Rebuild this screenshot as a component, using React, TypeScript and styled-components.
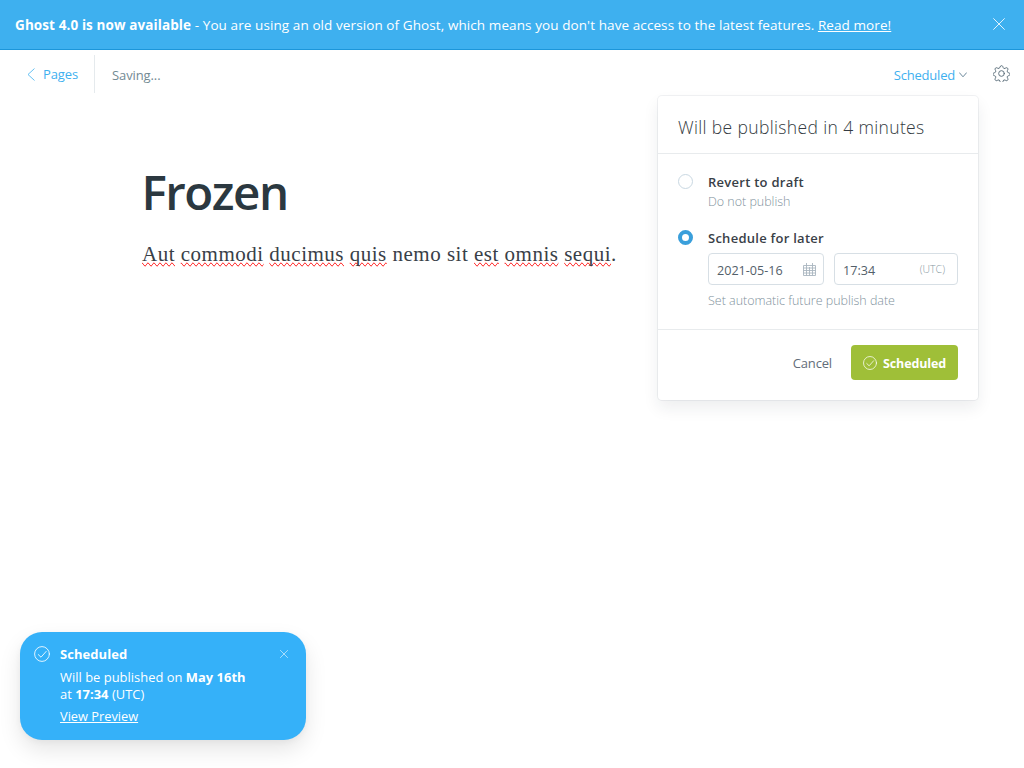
import React from 'react';
import styled, { createGlobalStyle } from 'styled-components';

const GlobalStyle = createGlobalStyle`
  *, *::before, *::after { box-sizing: border-box; }
  html, body { margin: 0; padding: 0; height: 100%; }
  body {
    background: #fff;
    color: #394047;
    font-family: "Open Sans", "Noto Sans", sans-serif;
    font-size: 13px;
    overflow: hidden;
  }
  h1, h2, p { margin: 0; }
`;

const Screen = styled.div`
  position: relative;
  display: flex;
  flex-direction: column;
  height: 768px;
  width: 1024px;
  overflow: hidden;
`;

const Banner = styled.header`
  display: flex;
  align-items: center;
  justify-content: space-between;
  height: 50px;
  padding: 0 19px 1px 15px;
  background: #3eb0ef;
  border-bottom: 1px solid #1c96da;
  color: #fff;
`;

const BannerText = styled.p`
  font-size: 13.5px;
  font-weight: 500;
  line-height: 20px;
  letter-spacing: 0.09px;
  white-space: nowrap;
  padding-top: 1px;
  b { font-weight: 700; letter-spacing: 0.1px; }
`;

const Link = styled.a`
  color: inherit;
  text-decoration: underline;
  text-underline-offset: 1px;
`;

const IconButton = styled.button`
  display: flex;
  padding: 0;
  border: 0;
  background: none;
  color: inherit;
`;

const Toolbar = styled.nav`
  display: flex;
  align-items: center;
  height: 46px;
  padding: 2px 14.5px 0 27px;
  line-height: 20px;
  white-space: nowrap;
`;

const BackLink = styled.a`
  display: flex;
  align-items: center;
  height: 38px;
  width: 68px;
  gap: 8px;
  border-right: 1px solid #e5eaed;
  color: #3eb0ef;
  font-size: 13px;
  letter-spacing: -0.1px;
`;

const SaveState = styled.span`
  flex: 1;
  padding: 2px 0 0 17px;
  color: #738a94;
  font-size: 13px;
  letter-spacing: -0.1px;
`;

const StatusTrigger = styled.button`
  display: flex;
  align-items: center;
  gap: 4px;
  margin: 2px 25.5px 0 0;
  padding: 0;
  border: 0;
  background: none;
  color: #3eb0ef;
  font: inherit;
  letter-spacing: -0.2px;
`;

const SettingsButton = styled(IconButton)`
  margin-bottom: 1px;
`;

const Article = styled.main`
  padding: 64px 0 0 142px;
`;

const Title = styled.h1`
  margin-left: -0.5px;
  color: #2b3840;
  font-size: 47.5px;
  font-weight: 600;
  line-height: 64px;
  letter-spacing: -1.5px;
`;

const Paragraph = styled.p`
  margin-top: 14px;
  color: #394047;
  font-family: "Liberation Serif", serif;
  font-size: 21px;
  line-height: 32px;
  letter-spacing: 0.5px;
  white-space: nowrap;
`;

const Misspelled = styled.span`
  text-decoration-line: spelling-error;
`;

const Popover = styled.section`
  position: absolute;
  top: 96px;
  left: 658px;
  width: 320px;
  height: 304px;
  background: #fff;
  border-radius: 4px;
  box-shadow: 0 0 0 1px rgba(99, 114, 130, 0.09), 0 8px 16px rgba(27, 39, 51, 0.08);
`;

const PopoverTitle = styled.h2`
  height: 58px;
  padding: 0 20px;
  border-bottom: 1px solid #e8ebed;
  color: #343b42;
  font-size: 17.5px;
  font-weight: 300;
  line-height: 63px;
  letter-spacing: 0.36px;
  white-space: nowrap;
`;

const Options = styled.div`
  display: flex;
  flex-direction: column;
  gap: 17px;
  height: 176px;
  padding: 18px 20px 0;
  border-bottom: 1px solid #e8ebed;
`;

const Option = styled.div`
  display: grid;
  grid-template-columns: 30px 1fr;
`;

const Radio = styled.span<{ $checked?: boolean }>`
  width: 15px;
  height: 15px;
  margin-top: 2px;
  border: ${p => (p.$checked ? '4px solid #3a9fdb' : '1px solid #c9d8e2')};
  border-radius: 50%;
  background: #fff;
`;

const OptionLabel = styled.div`
  margin-bottom: 1px;
  font-size: 13px;
  font-weight: 600;
  line-height: 20px;
  letter-spacing: 0.26px;
`;

const OptionHint = styled.div`
  color: #7f929d;
  font-size: 12.5px;
  font-weight: 300;
  line-height: 18px;
  letter-spacing: -0.02px;
`;

const Fields = styled.div`
  display: flex;
  gap: 10px;
  margin: 5px 0 7px;
`;

const Field = styled.div<{ $width: number }>`
  display: flex;
  align-items: center;
  justify-content: space-between;
  width: ${p => p.$width}px;
  height: 32px;
  padding: 0 7px 0 8px;
  border: 1px solid #d7dfe5;
  border-radius: 4px;
  color: #53606a;
  font-size: 12.6px;
`;

const FieldValue = styled.span`
  padding-top: 2px;
`;

const Zone = styled.span`
  padding-right: 5px;
  color: #8797a1;
  font-size: 10.5px;
  font-weight: 300;
`;

const Actions = styled.footer`
  display: flex;
  align-items: center;
  justify-content: flex-end;
  gap: 19px;
  padding: 15px 20px;
`;

const CancelButton = styled.button`
  padding: 0;
  border: 0;
  background: none;
  color: #626d79;
  font: inherit;
  letter-spacing: -0.15px;
`;

const ConfirmButton = styled.button`
  display: flex;
  align-items: center;
  gap: 6px;
  width: 107px;
  height: 35px;
  padding: 0 0 0 12px;
  border: 0;
  border-radius: 4px;
  background: #9fbf38;
  color: #fff;
  font: 700 12.5px "Open Sans", sans-serif;
  letter-spacing: -0.13px;
  span { padding-top: 2px; }
`;

const Toast = styled.aside`
  position: absolute;
  left: 20px;
  top: 632px;
  display: grid;
  grid-template-columns: 26px 1fr 10px;
  width: 286px;
  height: 108px;
  padding: 13px 16px 0 14px;
  border-radius: 22px;
  background: #35b1f9;
  color: #fff;
  box-shadow: 0 10px 22px rgba(0, 0, 0, 0.1), 0 2px 6px rgba(0, 0, 0, 0.04);
  white-space: nowrap;
  > svg { margin-top: 1px; }
`;

const ToastTitle = styled.div`
  font-size: 13px;
  font-weight: 700;
  line-height: 19px;
  letter-spacing: 0.05px;
`;

const ToastMessage = styled.p`
  margin: 5px 0;
  font-size: 12.9px;
  line-height: 17px;
  letter-spacing: 0.03px;
`;

const ToastLink = styled(Link)`
  display: block;
  font-size: 12.8px;
  line-height: 17px;
`;

const ToastClose = styled(IconButton)`
  height: 10px;
  margin-top: 5px;
`;

const Cross = ({ size }: { size: number }) => (
  <svg width={size} height={size} viewBox="0 0 12 12" fill="none" stroke="currentColor" strokeWidth="0.85" strokeLinecap="round">
    <path d="M.6.6l10.8 10.8M11.4.6L.6 11.4" />
  </svg>
);

const CheckCircle = ({ size }: { size: number }) => (
  <svg width={size} height={size} viewBox="0 0 16 16" fill="none" stroke="currentColor" strokeWidth="0.85" strokeLinecap="round" strokeLinejoin="round">
    <circle cx="8" cy="8" r="7.4" />
    <path d="M4.3 8.6l2.7 2.6 5.2-5.8" />
  </svg>
);

const ChevronLeft = () => (
  <svg width="8" height="13" viewBox="0 0 8 13" fill="none" stroke="currentColor" strokeWidth="0.8" strokeLinecap="round" strokeLinejoin="round">
    <path d="M7.2.8L1 6.5l6.2 5.7" />
  </svg>
);

const ChevronDown = () => (
  <svg width="8" height="6" viewBox="0 0 8 6" fill="none" stroke="#5c7c91" strokeWidth="0.9" strokeLinecap="round" strokeLinejoin="round">
    <path d="M.5.8L4 4.8 7.5.8" />
  </svg>
);

const Gear = () => (
  <svg width="17" height="17" viewBox="0 0 24 24" fill="none" stroke="#5f717d" strokeWidth="1.4" strokeLinecap="round" strokeLinejoin="round">
    <circle cx="12" cy="12" r="4" />
    <path d="M10.1 2.3a2 2 0 0 1 3.8 0l.4 1.2a2 2 0 0 0 2.8 1.2l1.1-.6a2 2 0 0 1 2.7 2.7l-.6 1.1a2 2 0 0 0 1.2 2.8l1.2.4a2 2 0 0 1 0 3.8l-1.2.4a2 2 0 0 0-1.2 2.8l.6 1.1a2 2 0 0 1-2.7 2.7l-1.1-.6a2 2 0 0 0-2.8 1.2l-.4 1.2a2 2 0 0 1-3.8 0l-.4-1.2a2 2 0 0 0-2.8-1.2l-1.1.6a2 2 0 0 1-2.7-2.7l.6-1.1a2 2 0 0 0-1.2-2.8l-1.2-.4a2 2 0 0 1 0-3.8l1.2-.4a2 2 0 0 0 1.2-2.8l-.6-1.1a2 2 0 0 1 2.7-2.7l1.1.6a2 2 0 0 0 2.8-1.2z" />
  </svg>
);

const Calendar = () => (
  <svg width="13" height="13" viewBox="0 0 13 13" fill="none" stroke="#a9b6bf" strokeWidth="0.9">
    <path d="M.5 2.5h12v10H.5zM.5 5h12M.5 7.5h12M.5 10h12M3.5 0v12.5M6.5 4v8.5M9.5 0v12.5" />
  </svg>
);

export default function App() {
  return (
    <>
      <GlobalStyle />
      <Screen>
        <Banner>
          <BannerText>
            <b>Ghost 4.0 is now available</b> - You are using an old version of Ghost, which means you don't have
            access to the latest features. <Link>Read more!</Link>
          </BannerText>
          <IconButton aria-label="Close"><Cross size={12} /></IconButton>
        </Banner>

        <Toolbar>
          <BackLink><ChevronLeft />Pages</BackLink>
          <SaveState>Saving...</SaveState>
          <StatusTrigger>Scheduled<ChevronDown /></StatusTrigger>
          <SettingsButton aria-label="Settings"><Gear /></SettingsButton>
        </Toolbar>

        <Article>
          <Title>Frozen</Title>
          <Paragraph>
            <Misspelled>Aut</Misspelled> <Misspelled>commodi</Misspelled> <Misspelled>ducimus</Misspelled>{' '}
            <Misspelled>quis</Misspelled> nemo sit <Misspelled>est</Misspelled> <Misspelled>omnis</Misspelled>{' '}
            <Misspelled>sequi</Misspelled>.
          </Paragraph>
        </Article>

        <Popover>
          <PopoverTitle>Will be published in 4 minutes</PopoverTitle>
          <Options>
            <Option>
              <Radio />
              <div>
                <OptionLabel>Revert to draft</OptionLabel>
                <OptionHint>Do not publish</OptionHint>
              </div>
            </Option>
            <Option>
              <Radio $checked />
              <div>
                <OptionLabel>Schedule for later</OptionLabel>
                <Fields>
                  <Field $width={116}><FieldValue>2021-05-16</FieldValue><Calendar /></Field>
                  <Field $width={124}><FieldValue>17:34</FieldValue><Zone>(UTC)</Zone></Field>
                </Fields>
                <OptionHint>Set automatic future publish date</OptionHint>
              </div>
            </Option>
          </Options>
          <Actions>
            <CancelButton>Cancel</CancelButton>
            <ConfirmButton><CheckCircle size={14} /><span>Scheduled</span></ConfirmButton>
          </Actions>
        </Popover>

        <Toast>
          <CheckCircle size={16} />
          <div>
            <ToastTitle>Scheduled</ToastTitle>
            <ToastMessage>
              Will be published on <b>May 16th</b><br />at <b>17:34</b> (UTC)
            </ToastMessage>
            <ToastLink>View Preview</ToastLink>
          </div>
          <ToastClose aria-label="Dismiss"><Cross size={8} /></ToastClose>
        </Toast>
      </Screen>
    </>
  );
}
